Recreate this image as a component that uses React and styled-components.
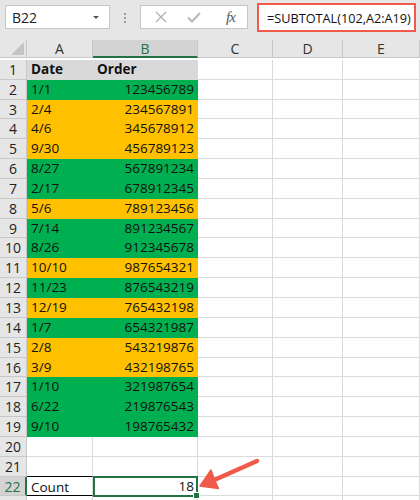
import React from "react";
import styled, { createGlobalStyle } from "styled-components";

const Global = createGlobalStyle`
  html, body { margin: 0; padding: 0; background: #fff; overflow: hidden; }
  body { font-family: "Open Sans", "Liberation Sans", sans-serif; }
`;

const Page = styled.div`
  position: relative;
  width: 420px;
  height: 500px;
  overflow: hidden;
  background: #fff;
`;

const Toolbar = styled.div`
  height: 40px;
  background: #e6e6e6;
  display: flex;
  align-items: flex-start;
  padding: 3px 4px 0 5px;
  box-sizing: border-box;
  & > * {
    flex-shrink: 0;
  }
`;

const NameBox = styled.div`
  margin-top: 2px;
  width: 105px;
  height: 24px;
  background: #fff;
  border: 1px solid #c6c6c6;
  box-sizing: border-box;
  display: flex;
  align-items: center;
  justify-content: space-between;
  padding: 0 10px 0 6px;
  font-size: 14px;
  color: #222;
`;

const Caret = styled.span`
  width: 0;
  height: 0;
  border-left: 3px solid transparent;
  border-right: 3px solid transparent;
  border-top: 3px solid #555;
`;

const Dots = styled.div`
  width: 30px;
  height: 29px;
  display: flex;
  flex-direction: column;
  align-items: center;
  justify-content: center;
  gap: 2px;
  span {
    width: 2px;
    height: 2px;
    background: #9a9a9a;
  }
`;

const FnBox = styled.div`
  margin-top: 2px;
  width: 108px;
  height: 24px;
  background: #fff;
  border: 1px solid #c6c6c6;
  box-sizing: border-box;
  display: flex;
  align-items: center;
  padding: 0 0 0 13px;
  gap: 18px;
  color: #b4b4b4;
`;

const Fx = styled.span`
  font-family: "Liberation Serif", serif;
  font-style: italic;
  color: #555;
  font-size: 15px;
  margin-left: 6px;
  letter-spacing: -1px;
`;

const Formula = styled.div`
  margin-left: 9px;
  flex: 1 1 0;
  min-width: 0;
  height: 29px;
  border: 2.5px solid #f05a4a;
  box-sizing: border-box;
  background: #fff;
  display: flex;
  align-items: center;
  padding-left: 8px;
  font-size: 12.7px;
  color: #111;
  white-space: nowrap;
  overflow: hidden;
`;

const Grid = styled.div`
  display: grid;
  grid-template-columns: 27px 66px 105px 75px 70px 77px;
  grid-auto-rows: 19.85px;
`;

const Corner = styled.div`
  height: 18px;
  background: #e6e6e6;
  border-right: 1px solid #c8c8c8;
  border-bottom: 1px solid #c8c8c8;
  box-sizing: border-box;
  position: relative;
  &::after {
    content: "";
    position: absolute;
    right: 2px;
    bottom: 2px;
    border-left: 13px solid transparent;
    border-bottom: 13px solid #c4c4c4;
  }
`;

const ColHead = styled.div`
  height: 18px;
  box-sizing: border-box;
  background: ${(p) => (p.$sel ? "#d3d3d3" : "#e6e6e6")};
  border-right: 1px solid #c8c8c8;
  border-bottom: ${(p) => (p.$sel ? "2px solid #217346" : "1px solid #c8c8c8")};
  color: ${(p) => (p.$sel ? "#217346" : "#333")};
  font-size: 14px;
  line-height: 17px;
  text-align: center;
`;

const RowHead = styled.div`
  box-sizing: border-box;
  background: ${(p) => (p.$sel ? "#d3d3d3" : "#e6e6e6")};
  border-right: ${(p) => (p.$sel ? "2px solid #217346" : "1px solid #c8c8c8")};
  border-bottom: 1px solid #c8c8c8;
  color: ${(p) => (p.$sel ? "#217346" : "#222")};
  font-size: 14px;
  line-height: 19px;
  text-align: center;
`;

const fills = { g: "#00b050", o: "#ffc000", h: "#d9d9d9" };

const Cell = styled.div`
  box-sizing: border-box;
  background: ${(p) => fills[p.$fill] || "#fff"};
  border-right: 1px solid ${(p) => fills[p.$fill] || "#dadada"};
  border-bottom: 1px solid ${(p) => fills[p.$fill] || "#dadada"};
  font-size: 13.5px;
  line-height: 19px;
  font-weight: ${(p) => (p.$bold ? 700 : 400)};
  color: #111;
  padding: 0 3px 0 4px;
  text-align: ${(p) => (p.$right ? "right" : "left")};
  white-space: nowrap;
  overflow: hidden;
`;

const CountCell = styled(Cell)`
  border-top: 1px solid #000;
  border-bottom: 1px solid #000;
  margin-top: -1px;
  line-height: 20px;
`;

const Active = styled(Cell)`
  position: relative;
  overflow: visible;
  border: 2px solid #217346;
  margin-top: -1px;
  height: 21px;
  line-height: 17px;
  padding-right: 2px;
  &::after {
    content: "";
    position: absolute;
    right: -4px;
    bottom: -4px;
    width: 5px;
    height: 5px;
    background: #217346;
    border: 1px solid #fff;
  }
`;

const Arrow = styled.svg`
  position: absolute;
  left: 0;
  top: 0;
  pointer-events: none;
`;

const data = [
  ["1/1", "123456789", "g"],
  ["2/4", "234567891", "o"],
  ["4/6", "345678912", "o"],
  ["9/30", "456789123", "o"],
  ["8/27", "567891234", "g"],
  ["2/17", "678912345", "g"],
  ["5/6", "789123456", "o"],
  ["7/14", "891234567", "g"],
  ["8/26", "912345678", "g"],
  ["10/10", "987654321", "o"],
  ["11/23", "876543219", "g"],
  ["12/19", "765432198", "o"],
  ["1/7", "654321987", "g"],
  ["2/8", "543219876", "o"],
  ["3/9", "432198765", "o"],
  ["1/10", "321987654", "g"],
  ["6/22", "219876543", "g"],
  ["9/10", "198765432", "g"],
];

const Empty = () => (
  <>
    <Cell />
    <Cell />
    <Cell />
  </>
);

export default function App() {
  return (
    <Page>
      <Global />
      <Toolbar>
        <NameBox>
          B22
          <Caret />
        </NameBox>
        <Dots>
          <span />
          <span />
          <span />
        </Dots>
        <FnBox>
          <svg width="14" height="14" viewBox="0 0 14 14">
            <path d="M2 2 L12 12 M12 2 L2 12" stroke="#b0b0b0" strokeWidth="1.3" fill="none" />
          </svg>
          <svg width="16" height="14" viewBox="0 0 16 14">
            <path d="M2 7.5 L6 11.5 L14 3" stroke="#b8b8b8" strokeWidth="2" fill="none" />
          </svg>
          <Fx>fx</Fx>
        </FnBox>
        <Formula>=SUBTOTAL(102,A2:A19)</Formula>
      </Toolbar>
      <Grid>
        <Corner />
        <ColHead>A</ColHead>
        <ColHead $sel>B</ColHead>
        <ColHead>C</ColHead>
        <ColHead>D</ColHead>
        <ColHead>E</ColHead>

        <RowHead>1</RowHead>
        <Cell $fill="h" $bold>Date</Cell>
        <Cell $fill="h" $bold>Order</Cell>
        <Empty />

        {data.map(([d, n, f], i) => (
          <React.Fragment key={d + n}>
            <RowHead>{i + 2}</RowHead>
            <Cell $fill={f}>{d}</Cell>
            <Cell $fill={f} $right>{n}</Cell>
            <Empty />
          </React.Fragment>
        ))}

        <RowHead>20</RowHead>
        <Cell />
        <Cell />
        <Empty />
        <RowHead>21</RowHead>
        <Cell />
        <Cell />
        <Empty />
        <RowHead $sel>22</RowHead>
        <CountCell>Count</CountCell>
        <Active $right>18</Active>
        <Empty />
        <RowHead />
        <Cell />
        <Cell />
        <Empty />
      </Grid>
      <Arrow width="420" height="500" viewBox="0 0 420 500">
        <line x1="257" y1="461" x2="212" y2="481" stroke="#f05a4a" strokeWidth="4.5" strokeLinecap="round" />
        <path d="M200 486 L211 470 L214.5 480 L218.5 488.5 Z" fill="#f05a4a" stroke="#f05a4a" strokeWidth="1.5" strokeLinejoin="round" />
      </Arrow>
    </Page>
  );
}
